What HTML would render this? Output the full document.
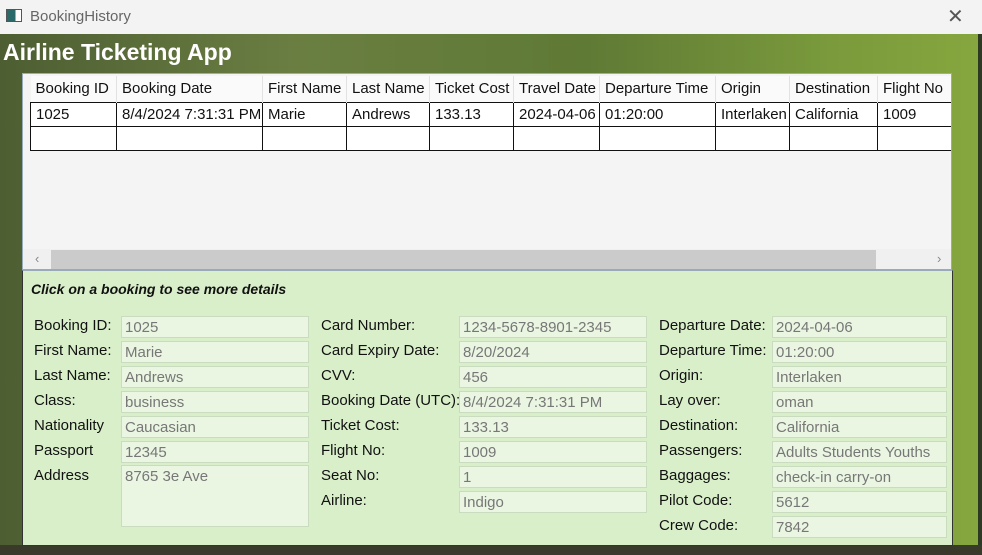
<!DOCTYPE html>
<html><head><style>
*{margin:0;padding:0;box-sizing:border-box}
body{width:982px;height:555px;overflow:hidden;position:relative;font-family:"Liberation Sans",sans-serif;background:#2f3a22}
.abs{position:absolute}
#title{left:0;top:0;width:982px;height:34px;background:#f3f3f3;color:#666;font-size:15px}
#bg{left:0;top:34px;width:978px;height:511px;background:linear-gradient(90deg,#4d5e32 0%,#6a7e42 30%,#5f7a35 60%,#7a9a3c 85%,#86a63f 100%)}
#bottom{left:0;top:545px;width:982px;height:10px;background:#3a3a2a}
#grid{left:22px;top:73px;width:930px;height:197px;background:#f4f4f4;border:1px solid #9ab;overflow:hidden}
table{border-collapse:collapse;position:absolute;left:7px;top:2px;font-size:15px;color:#111;table-layout:fixed;width:921px}
td,th{height:24px;padding:0 5px;white-space:nowrap;font-weight:normal;text-align:left;overflow:hidden}
th{background:#fafafa;border-right:1px solid #e2e2e2;height:26px}
td{border:1px solid #111;background:#fff}
#panel{left:22px;top:270px;width:931px;height:276px;background:#d9efca;border:1px solid #333;border-top:1px solid #9ab}
.l{position:absolute;font-size:15px;color:#111}
.b{position:absolute;height:22px;background:#eaf6e2;border:1px solid #c9dcc0;font-size:15px;color:#777;padding:2px 3px}
</style></head><body>
<div id="title" class="abs"><div class="abs" style="left:6px;top:9px;width:16px;height:13px;border:1px solid #555;background:linear-gradient(90deg,#2a6a6a 60%,#fff 60%)"></div><span class="abs" style="left:30px;top:8px">BookingHistory</span><span class="abs" style="left:947px;top:4px;font-size:20px;color:#555">✕</span></div>
<div id="bg" class="abs"></div>
<div id="bottom" class="abs"></div>
<div class="abs" style="left:3px;top:39px;color:#fff;font-weight:bold;font-size:23px">Airline Ticketing App</div>
<div id="grid" class="abs">
<table>
<colgroup><col style="width:86px"><col style="width:146px"><col style="width:84px"><col style="width:83px"><col style="width:84px"><col style="width:86px"><col style="width:116px"><col style="width:74px"><col style="width:88px"><col style="width:74px"></colgroup>
<tr><th>Booking ID</th><th>Booking Date</th><th>First Name</th><th>Last Name</th><th>Ticket Cost</th><th>Travel Date</th><th>Departure Time</th><th>Origin</th><th>Destination</th><th>Flight No</th></tr>
<tr><td>1025</td><td>8/4/2024 7:31:31 PM</td><td>Marie</td><td>Andrews</td><td>133.13</td><td>2024-04-06</td><td>01:20:00</td><td>Interlaken</td><td>California</td><td>1009</td></tr>
<tr><td></td><td></td><td></td><td></td><td></td><td></td><td></td><td></td><td></td><td></td></tr>
</table>
<div class="abs" style="left:0;top:175px;width:928px;height:21px;background:#f0f0f0"></div>
<div class="abs" style="left:28px;top:176px;width:825px;height:20px;background:#cbcbcb"></div>
<span class="abs" style="left:12px;top:177px;color:#888;font-size:13px">‹</span>
<span class="abs" style="left:914px;top:177px;color:#888;font-size:13px">›</span>
</div>
<div id="panel" class="abs">
<div class="l" style="left:8px;top:10px;font-weight:bold;font-style:italic;font-size:14px">Click on a booking to see more details</div>
</div>
<div class="l" style="left:34px;top:317px">Booking ID:</div><div class="b" style="left:121px;top:316px;width:188px">1025</div>
<div class="l" style="left:34px;top:342px">First Name:</div><div class="b" style="left:121px;top:341px;width:188px">Marie</div>
<div class="l" style="left:34px;top:367px">Last Name:</div><div class="b" style="left:121px;top:366px;width:188px">Andrews</div>
<div class="l" style="left:34px;top:392px">Class:</div><div class="b" style="left:121px;top:391px;width:188px">business</div>
<div class="l" style="left:34px;top:417px">Nationality</div><div class="b" style="left:121px;top:416px;width:188px">Caucasian</div>
<div class="l" style="left:34px;top:442px">Passport</div><div class="b" style="left:121px;top:441px;width:188px">12345</div>
<div class="l" style="left:34px;top:467px">Address</div><div class="b" style="left:121px;top:465px;width:188px;height:62px">8765 3e Ave</div>

<div class="l" style="left:321px;top:317px">Card Number:</div><div class="b" style="left:459px;top:316px;width:188px">1234-5678-8901-2345</div>
<div class="l" style="left:321px;top:342px">Card Expiry Date:</div><div class="b" style="left:459px;top:341px;width:188px">8/20/2024</div>
<div class="l" style="left:321px;top:367px">CVV:</div><div class="b" style="left:459px;top:366px;width:188px">456</div>
<div class="l" style="left:321px;top:392px">Booking Date (UTC):</div><div class="b" style="left:459px;top:391px;width:188px">8/4/2024 7:31:31 PM</div>
<div class="l" style="left:321px;top:417px">Ticket Cost:</div><div class="b" style="left:459px;top:416px;width:188px">133.13</div>
<div class="l" style="left:321px;top:442px">Flight No:</div><div class="b" style="left:459px;top:441px;width:188px">1009</div>
<div class="l" style="left:321px;top:467px">Seat No:</div><div class="b" style="left:459px;top:466px;width:188px">1</div>
<div class="l" style="left:321px;top:492px">Airline:</div><div class="b" style="left:459px;top:491px;width:188px">Indigo</div>

<div class="l" style="left:659px;top:317px">Departure Date:</div><div class="b" style="left:772px;top:316px;width:175px">2024-04-06</div>
<div class="l" style="left:659px;top:342px">Departure Time:</div><div class="b" style="left:772px;top:341px;width:175px">01:20:00</div>
<div class="l" style="left:659px;top:367px">Origin:</div><div class="b" style="left:772px;top:366px;width:175px">Interlaken</div>
<div class="l" style="left:659px;top:392px">Lay over:</div><div class="b" style="left:772px;top:391px;width:175px">oman</div>
<div class="l" style="left:659px;top:417px">Destination:</div><div class="b" style="left:772px;top:416px;width:175px">California</div>
<div class="l" style="left:659px;top:442px">Passengers:</div><div class="b" style="left:772px;top:441px;width:175px">Adults Students Youths</div>
<div class="l" style="left:659px;top:467px">Baggages:</div><div class="b" style="left:772px;top:466px;width:175px">check-in carry-on</div>
<div class="l" style="left:659px;top:492px">Pilot Code:</div><div class="b" style="left:772px;top:491px;width:175px">5612</div>
<div class="l" style="left:659px;top:517px">Crew Code:</div><div class="b" style="left:772px;top:516px;width:175px">7842</div>
</body></html>
